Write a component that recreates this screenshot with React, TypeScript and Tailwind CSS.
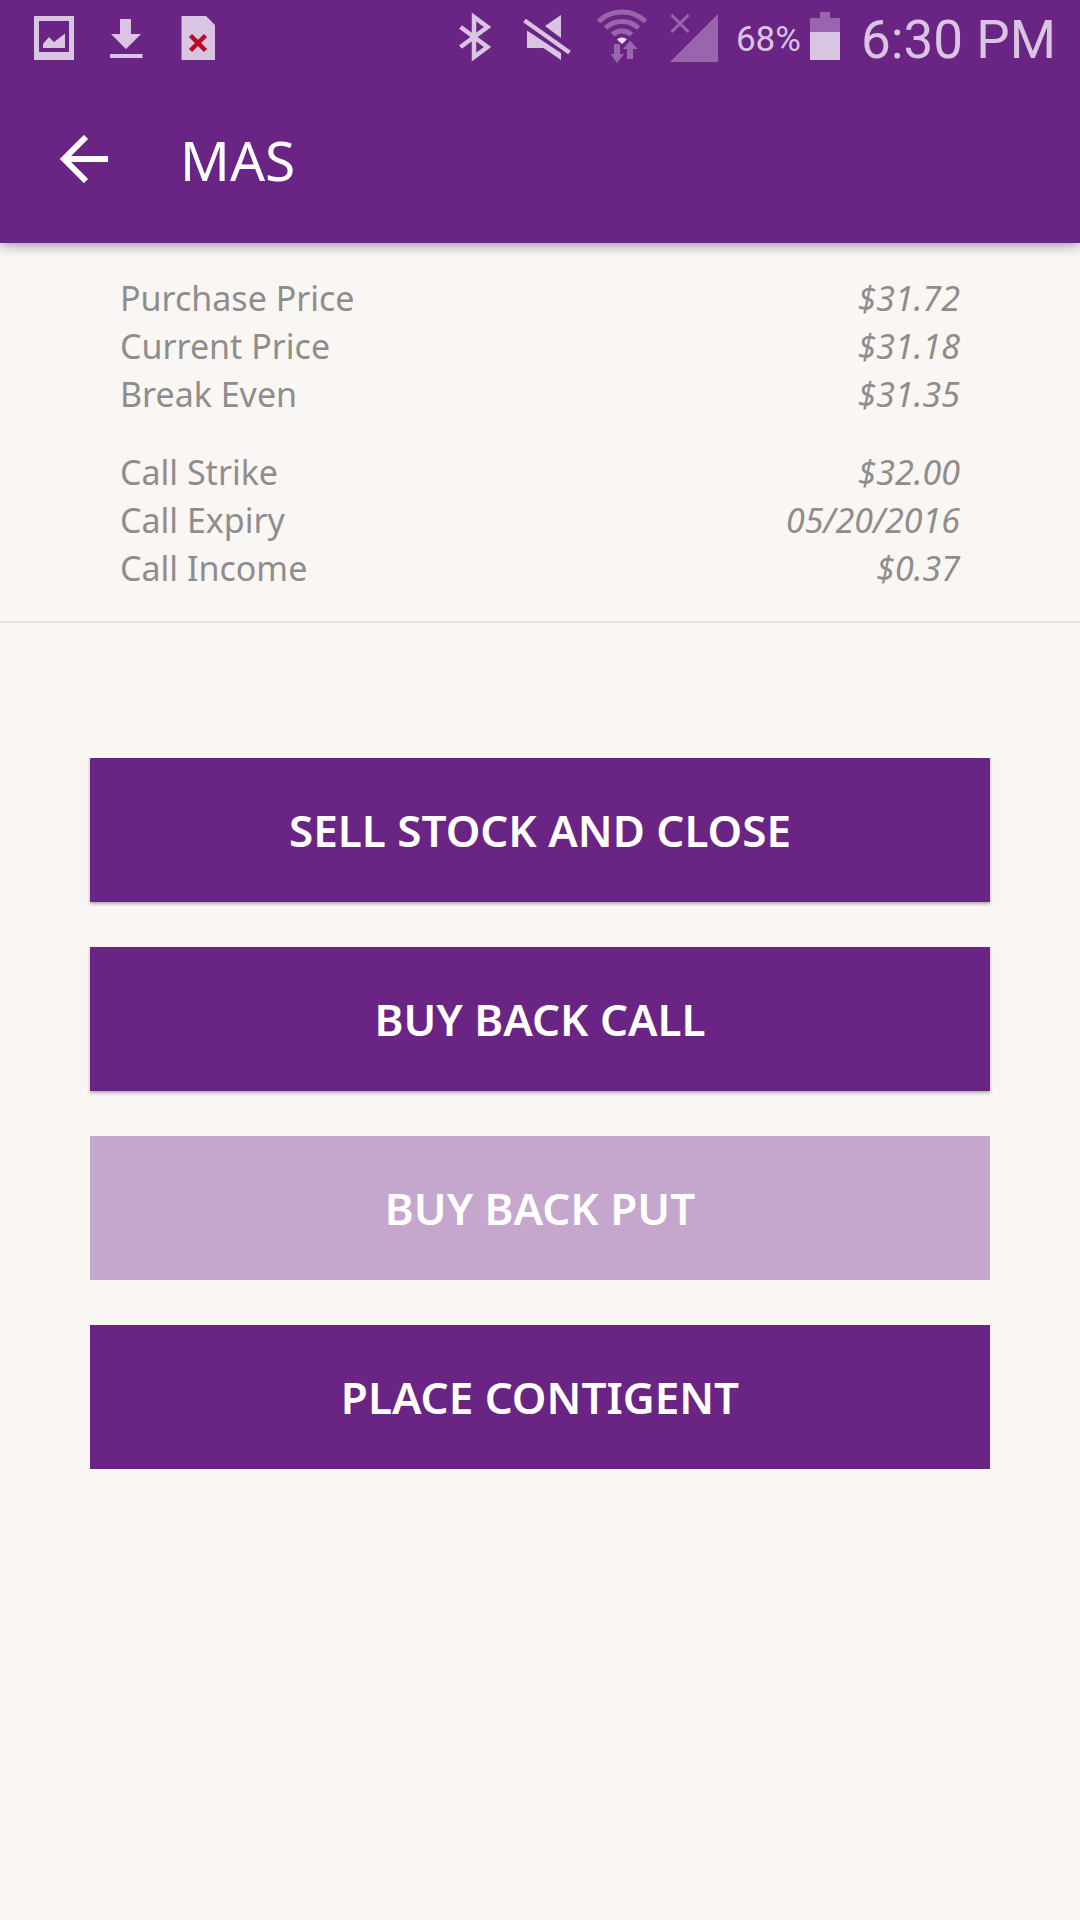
import React from "react";

type Quote = { label: string; value: string };

const prices: Quote[] = [
  { label: "Purchase Price", value: "$31.72" },
  { label: "Current Price", value: "$31.18" },
  { label: "Break Even", value: "$31.35" },
];

const call: Quote[] = [
  { label: "Call Strike", value: "$32.00" },
  { label: "Call Expiry", value: "05/20/2016" },
  { label: "Call Income", value: "$0.37" },
];

function LeftIcons() {
  return (
    <div className="flex gap-8 text-[#d9c4e1]">
      <svg className="h-[75px] w-11" viewBox="32 0 44 75" fill="currentColor" aria-label="Picture saved">
        <path fillRule="evenodd" d="M34 16h40v44H34zM39 21v31h30V21z" />
        <path d="M43 48v-4l6-7 5 5 11-8.500v14.500z" />
      </svg>
      <svg className="h-[75px] w-9" viewBox="108 0 36 75" fill="currentColor" aria-label="Download">
        <path d="M120 19h11v15h10l-15 15-15-15h9zM110 54h32.500v4H110z" />
      </svg>
      <svg className="h-[75px] w-11" viewBox="176 0 44 75" fill="currentColor" aria-label="File error">
        <path d="M181.500 16H206l9 9v35h-33.500z" />
        <path d="M190.500 35.500l15 15M205.500 35.500l-15 15" stroke="#b90a26" strokeWidth="4.500" fill="none" />
      </svg>
    </div>
  );
}

function RadioIcons() {
  return (
    <div className="flex gap-[21px] text-[#d9c4e1]">
      <svg className="h-[75px] w-[52px]" viewBox="449 0 52 75" fill="none" stroke="currentColor" strokeWidth="4.500" aria-label="Bluetooth">
        <path d="M460.500 27L487.500 47 474 57V17l13.500 10L460.500 47" />
      </svg>
      <svg className="h-[75px] w-[52px]" viewBox="522 0 52 75" fill="currentColor" aria-label="Muted">
        <path d="M545 26l16-11v23zM527 30.500L561 53v7l-17.500-12H527z" />
        <path d="M524.500 20.500l45 32" stroke="currentColor" strokeWidth="4.500" />
      </svg>
      <svg className="h-[75px] w-[52px]" viewBox="595 0 52 75" fill="none" stroke="#9a65ac" strokeWidth="5" aria-label="Wi-Fi">
        <path d="M598.500 21.500a34 34 0 0 1 47 0M605.500 28a24 24 0 0 1 33 0M612.500 34.500a14.500 14.500 0 0 1 19 0" />
        <path d="M617 39.500a7 7 0 0 1 10 0l-5 4.500z" fill="#eddff2" stroke="none" />
        <path d="M614 44h6v10h4l-7 9-6.500-9h3.500zM627 59v-10h-4l7-8.500 7.500 8.500H633v10z" fill="#9a65ac" stroke="none" />
      </svg>
      <svg className="h-[75px] w-[52px]" viewBox="668 0 52 75" fill="#9a65ac" aria-label="No signal">
        <path d="M718 14v48h-48z" />
        <path d="M671.500 15l17 17M688.500 15l-17 17" stroke="#9a65ac" strokeWidth="3" />
      </svg>
    </div>
  );
}

function StatusBar() {
  return (
    <div className="flex h-[75px] items-center justify-between pl-8 pr-6 font-[Roboto,sans-serif] text-[#d9c4e1]">
      <LeftIcons />
      <div className="flex items-center">
        <RadioIcons />
        <span className="ml-4 pt-1 text-[35px] leading-10">68%</span>
        <svg className="ml-2 h-[75px] w-8" viewBox="810 0 32 75" aria-label="Battery">
          <path d="M811 18h10v-6h10v6h10v14h-30z" fill="#9a65ac" />
          <path d="M811 32h30v28h-30z" fill="currentColor" />
        </svg>
        <span className="ml-5 pt-1 text-[53px] leading-[64px]">6:30 PM</span>
      </div>
    </div>
  );
}

function QuoteList({ rows }: { rows: Quote[] }) {
  return (
    <dl className="text-[34px] leading-12">
      {rows.map((row) => (
        <div key={row.label} className="flex justify-between">
          <dt>{row.label}</dt>
          <dd className="italic">{row.value}</dd>
        </div>
      ))}
    </dl>
  );
}

type ActionProps = { children: string; disabled?: boolean; flat?: boolean };

function ActionButton({ children, disabled = false, flat = false }: ActionProps) {
  return (
    <button
      type="button"
      disabled={disabled}
      className={`h-36 w-full bg-[#6a2483] text-[44px] font-semibold text-white disabled:bg-[#c5a6cc] ${
        flat || disabled ? "shadow-none" : "shadow-[0_2px_3px_rgba(0,0,0,0.3)]"
      }`}
    >
      {children}
    </button>
  );
}

export default function App() {
  return (
    <div className="min-h-screen bg-[#faf6f3] font-['Noto_Sans',sans-serif]">
      <header className="bg-[#6a2483] shadow-[0_2px_12px_rgba(0,0,0,0.4)]">
        <StatusBar />
        <div className="flex h-42 items-center gap-[72px] pl-[60px] text-white">
          <button type="button" aria-label="Back">
            <svg className="size-12" viewBox="0 0 48 48" fill="none" stroke="currentColor" strokeWidth="6">
              <path d="M48 24H5M26 2L4 24l22 22" />
            </svg>
          </button>
          <h1 className="text-[55px] leading-none">MAS</h1>
        </div>
      </header>
      <main>
        <section className="flex flex-col gap-[30px] border-b-2 border-[#e8e3e0] px-30 pt-[31px] pb-[29px] text-[#8f8d8c]">
          <QuoteList rows={prices} />
          <QuoteList rows={call} />
        </section>
        <section className="flex flex-col gap-[45px] px-[90px] pt-[135px]">
          <ActionButton>SELL STOCK AND CLOSE</ActionButton>
          <ActionButton>BUY BACK CALL</ActionButton>
          <ActionButton disabled>BUY BACK PUT</ActionButton>
          <ActionButton flat>PLACE CONTIGENT</ActionButton>
        </section>
      </main>
    </div>
  );
}
